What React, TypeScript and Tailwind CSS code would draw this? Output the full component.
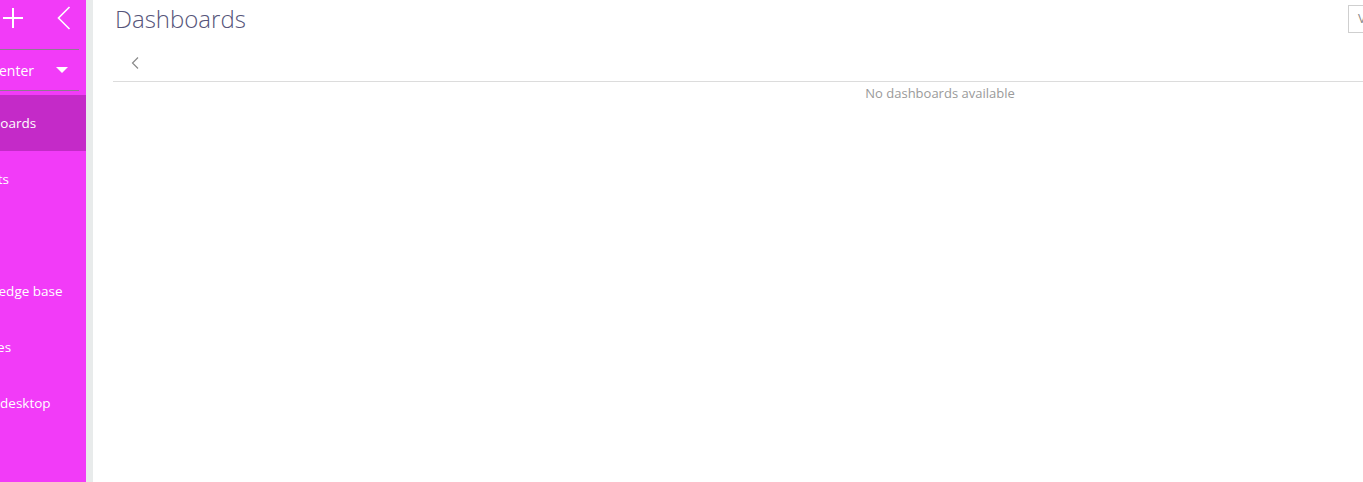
import React from "react";

const menuItems = [
  { label: "Dashboards", active: true },
  { label: "Reports", active: false },
  { label: "Feed", active: false },
  { label: "Knowledge base", active: false },
  { label: "Services", active: false },
  { label: "Agent desktop", active: false },
];

const App = () => {
  return (
    <div className="flex h-[482px] w-[1363px] overflow-hidden bg-white font-['Open_Sans',sans-serif]">
      {/* barra lateral */}
      <aside className="w-[86px] shrink-0 overflow-hidden bg-[#f23bf8] text-white">
        <div className="flex h-[49px] items-start">
          <svg width="22" height="22" viewBox="0 0 22 22" className="ml-[2px] mt-[7px]">
            <path d="M11 1v20M1 11h20" stroke="white" strokeWidth="2" />
          </svg>
          <svg width="14" height="24" viewBox="0 0 14 24" className="ml-auto mr-[15px] mt-[6px]">
            <path d="M12.5 1L1.5 12l11 11" stroke="white" strokeWidth="1.6" fill="none" />
          </svg>
        </div>
        <div className="h-px w-[79px] bg-[#8e7b90]" />
        <div className="flex h-[40px] w-[79px] items-center">
          <div className="flex w-[34px] justify-end whitespace-nowrap text-[14px]">
            Service center
          </div>
          <div className="ml-[22px] h-0 w-0 border-x-[6px] border-t-[6px] border-x-transparent border-t-white" />
        </div>
        <div className="h-px w-[79px] bg-[#8e7b90]" />
        <div className="h-[4px]" />
        {menuItems.map((item) => (
          <div
            key={item.label}
            className={
              item.active
                ? "flex h-[56px] items-center bg-[#c42ac8]"
                : "flex h-[56px] items-center"
            }
          >
            <span className="ml-[-40px] whitespace-nowrap text-[13.5px]">{item.label}</span>
          </div>
        ))}
      </aside>

      <div className="w-[7px] shrink-0 bg-[#e8ebeb]" />

      {/* contenido */}
      <main className="w-[1674px] shrink-0 pl-[20px]">
        <div className="flex w-[1305px] items-start">
          <h1 className="pl-[2px] pt-[3px] text-[24px] font-light leading-[32px] text-[#56557a]">
            Dashboards
          </h1>
          <button
            type="button"
            className="ml-auto mt-[5px] h-[28px] w-[70px] border border-[#cfcfcf] bg-white pl-[9px] text-left text-[13px] text-[#8a8a8a]"
          >
            View
          </button>
        </div>
        <div className="flex h-[47px] items-end border-b border-[#dcdcdc] pb-[12px]">
          <svg width="8" height="12" viewBox="0 0 8 12" className="ml-[18px]">
            <path d="M7 0.5L1.5 6 7 11.5" stroke="#8a8a8a" strokeWidth="1.2" fill="none" />
          </svg>
        </div>
        <div className="mt-[3px] text-center text-[13px] leading-[16px] text-[#9a9a9a]">
          No dashboards available
        </div>
      </main>
    </div>
  );
};

export default App;
